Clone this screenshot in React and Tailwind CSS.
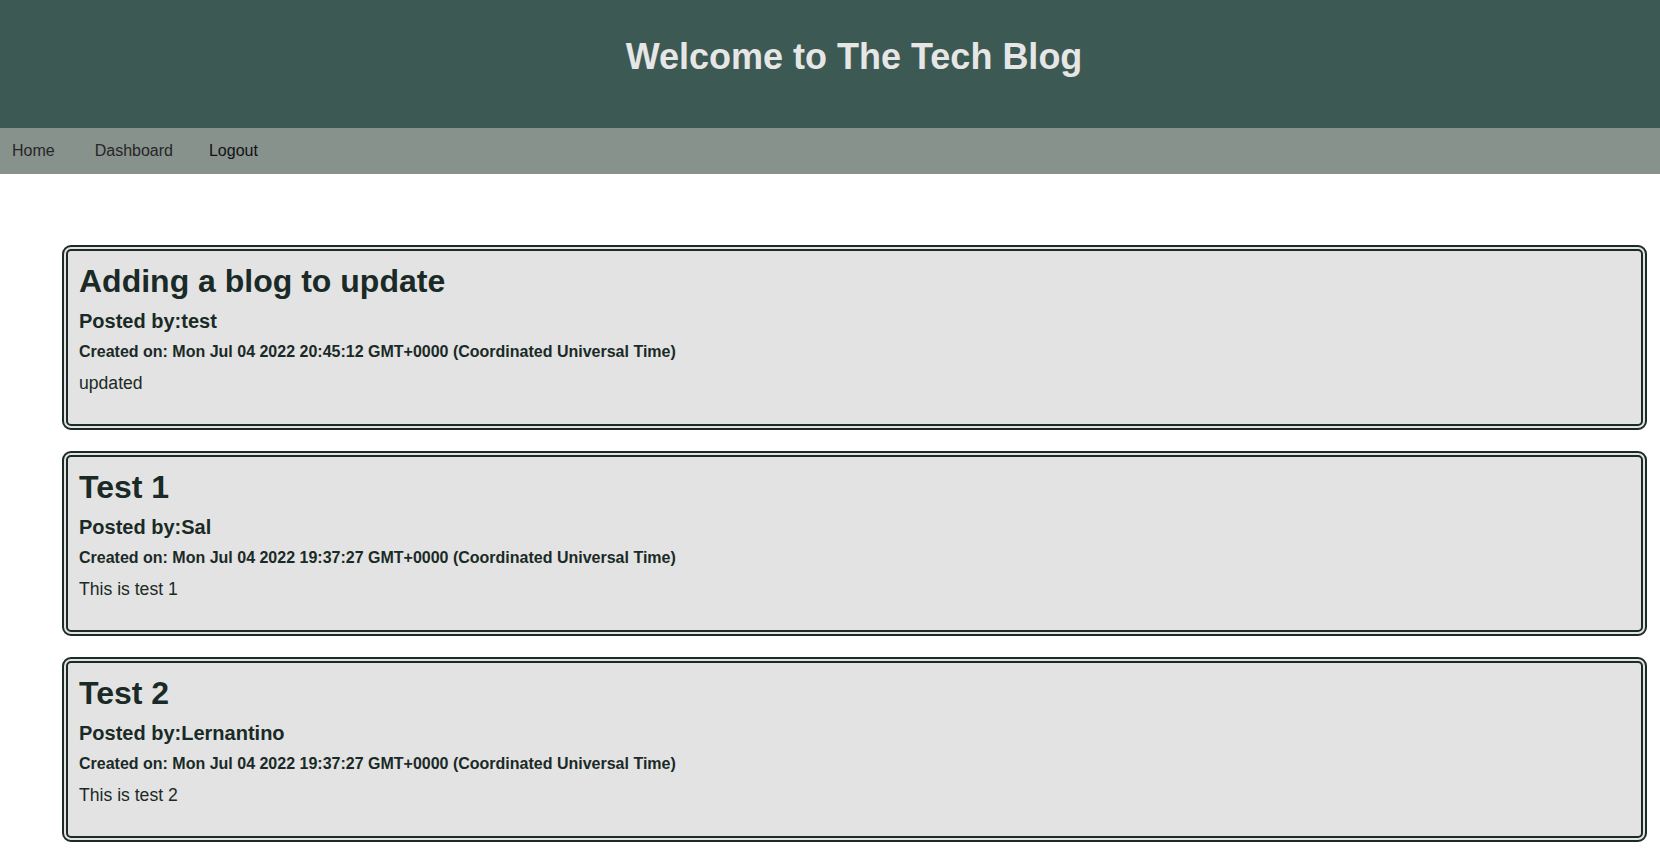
import React from 'react';

const posts = [
  {
    title: 'Adding a blog to update',
    author: 'test',
    created: 'Mon Jul 04 2022 20:45:12 GMT+0000 (Coordinated Universal Time)',
    body: 'updated',
  },
  {
    title: 'Test 1',
    author: 'Sal',
    created: 'Mon Jul 04 2022 19:37:27 GMT+0000 (Coordinated Universal Time)',
    body: 'This is test 1',
  },
  {
    title: 'Test 2',
    author: 'Lernantino',
    created: 'Mon Jul 04 2022 19:37:27 GMT+0000 (Coordinated Universal Time)',
    body: 'This is test 2',
  },
];

const App = () => {
  return (
    <div className="min-h-screen bg-white font-['Liberation_Sans',Arial,sans-serif]">
      {/* Header */}
      <header className="h-[128px] bg-[#3d5953] flex items-center justify-center pb-[14px] pl-[48px]">
        <h1 className="text-[36px] font-bold text-[#e6e6e6] leading-none">Welcome to The Tech Blog</h1>
      </header>

      {/* Nav */}
      <nav className="h-[46px] bg-[#87928d] flex items-center pl-[12px] text-[16px]">
        <a href="#" className="text-[#262626]">Home</a>
        <a href="#" className="text-[#262626] ml-[40px]">Dashboard</a>
        <a href="#" className="text-[#111111] ml-[36px]">Logout</a>
      </nav>

      {/* Posts */}
      <main className="pt-[71px] pl-[62px] pr-[13px] flex flex-col gap-[21px]">
        {posts.map((post, index) => (
          <div
            key={index}
            className="h-[185px] bg-[#e3e3e3] border-[6px] border-double border-[#1b2b26] rounded-[9px] px-[11px] pt-[12px] text-[#1a2a26]"
          >
            <h2 className="text-[32px] font-bold leading-[37px]">{post.title}</h2>
            <h3 className="text-[20px] font-bold leading-[23px] mt-[10px]">Posted by:{post.author}</h3>
            <h4 className="text-[16px] font-bold leading-[18px] mt-[10px]">Created on: {post.created}</h4>
            <p className="text-[17.6px] leading-[20px] mt-[12px]">{post.body}</p>
          </div>
        ))}
      </main>
    </div>
  );
};

export default App;
